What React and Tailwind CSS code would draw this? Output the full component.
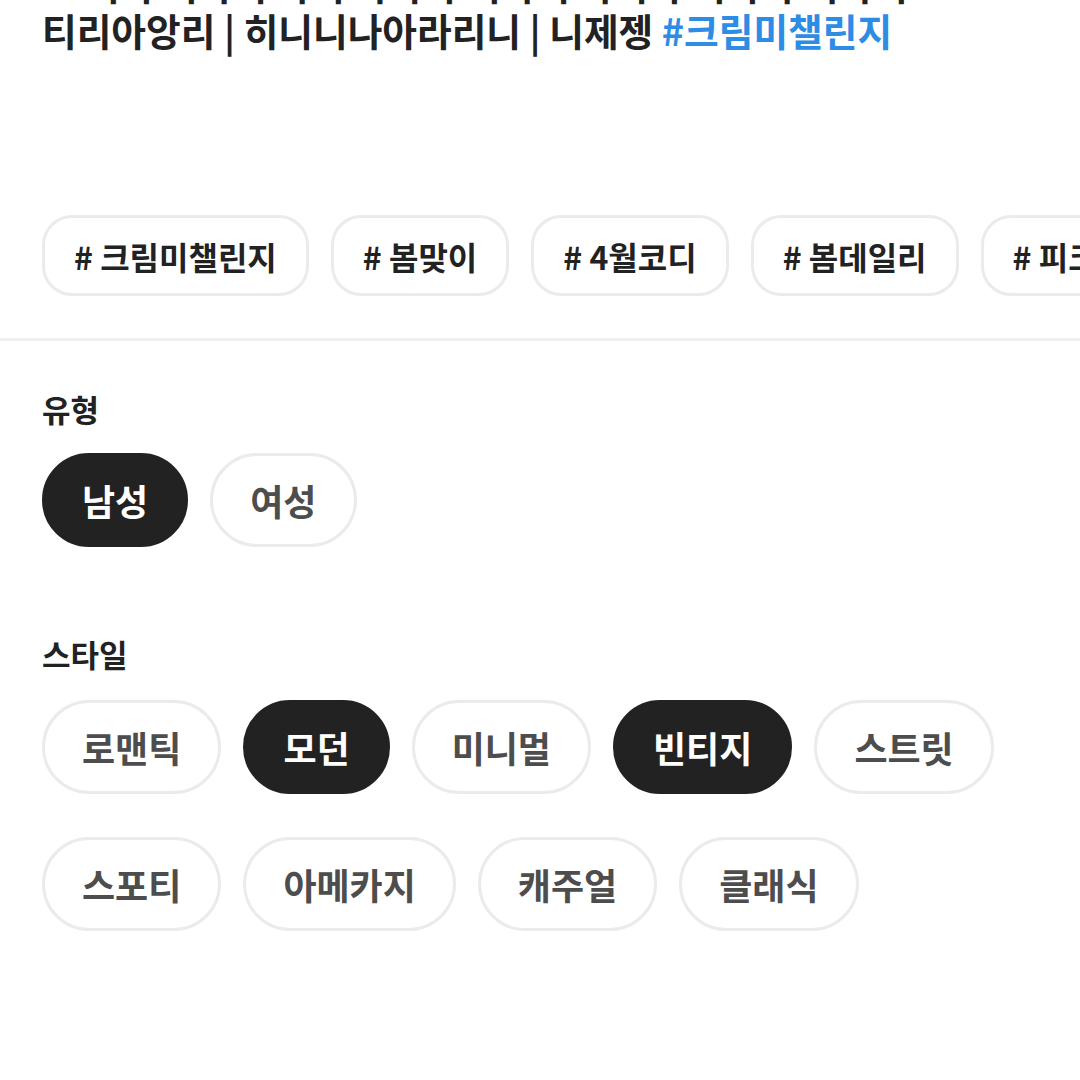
import React from 'react';

const hashtags = ['크림미챌린지', '봄맞이', '4월코디', '봄데일리', '피크닉룩'];
const genders = [
  { label: '남성', on: true },
  { label: '여성', on: false },
];
const styles = [
  { label: '로맨틱', on: false },
  { label: '모던', on: true },
  { label: '미니멀', on: false },
  { label: '빈티지', on: true },
  { label: '스트릿', on: false },
  { label: '스포티', on: false },
  { label: '아메카지', on: false },
  { label: '캐주얼', on: false },
  { label: '클래식', on: false },
];

function Pill({ label, on }) {
  return (
    <button
      className={
        on
          ? 'h-[94px] px-[37px] rounded-full bg-[#222222] border-[3px] border-[#222222] text-white text-[36px] font-bold leading-none'
          : 'h-[94px] px-[37px] rounded-full bg-white border-[3px] border-[#ebebeb] text-[#4d4d4d] text-[36px] font-bold leading-none'
      }
    >
      {label}
    </button>
  );
}

export default function App() {
  return (
    <div className="w-[1080px] h-[1080px] overflow-hidden bg-white font-['Noto_Sans_CJK_KR','Noto_Sans',sans-serif] text-[#222222]">
      <div className="px-[42px] mt-[-39px] text-[37.7px] font-bold leading-[46px] whitespace-nowrap">
        <p>트 리라 리아리 라리 라라라 리라리 라리라 리라라 리라리</p>
        <p>
          티리아앙리 | 히니니나아라리니 | 니제젱 <span className="text-[#2d8ce4]">#크림미챌린지</span>
        </p>
      </div>

      <div className="mt-[162px] pl-[42px] flex gap-[22px] whitespace-nowrap">
        {hashtags.map((t) => (
          <div
            key={t}
            className="shrink-0 h-[81px] px-[29px] flex items-center rounded-[30px] border-[3px] border-[#ebebeb] text-[32px] font-bold"
          >
            # {t}
          </div>
        ))}
      </div>

      <div className="mt-[42px] h-[3px] bg-[#f0f0f0]" />

      <div className="px-[42px]">
        <h2 className="mt-[48px] text-[31px] font-bold leading-[40px]">유형</h2>
        <div className="mt-[24px] flex gap-[22px]">
          {genders.map((g) => (
            <Pill key={g.label} {...g} />
          ))}
        </div>

        <h2 className="mt-[87px] text-[31px] font-bold leading-[40px]">스타일</h2>
        <div className="mt-[26px] flex flex-wrap gap-x-[22px] gap-y-[43px] w-[980px]">
          {styles.map((s) => (
            <Pill key={s.label} {...s} />
          ))}
        </div>
      </div>
    </div>
  );
}
